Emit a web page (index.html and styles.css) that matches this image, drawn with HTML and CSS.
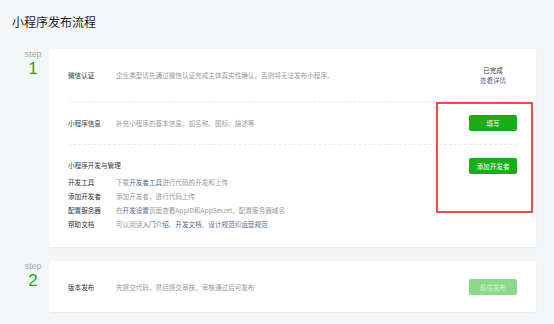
FILE: index.html
```html
<!DOCTYPE html>
<html lang="zh-CN">
<head>
  <meta charset="UTF-8">
  <title>小程序发布流程</title>
  <meta name="viewport" content="width=device-width, initial-scale=1.0">
  <link rel="stylesheet" href="styles.css">
</head>
<body>
  <div class="page">
    <h2 class="title">小程序发布流程</h2>

    <div class="step">
      <div class="step-no">
        <span class="step-word">step</span>
        <span class="step-num">1</span>
      </div>
      <div class="card">
        <div class="row row-first">
          <div class="label">微信认证</div>
          <div class="desc">企业类型请先通过微信认证完成主体真实性确认。否则将无法发布小程序。</div>
          <div class="action status">
            <div>已完成</div>
            <a class="link" href="#">查看详情</a>
          </div>
        </div>

        <div class="row row-second">
          <div class="label">小程序信息</div>
          <div class="desc">补充小程序的基本信息，如名称、图标、描述等</div>
          <div class="action"><button class="btn">填写</button></div>
        </div>

        <div class="row row-dev">
          <div class="dev-body">
            <div class="dev-head">小程序开发与管理</div>
            <div class="dev-line">
              <div class="label">开发工具</div>
              <div class="desc">下载<a class="link" href="#">开发者工具</a>进行代码的开发和上传</div>
            </div>
            <div class="dev-line">
              <div class="label">添加开发者</div>
              <div class="desc">添加开发者，进行代码上传</div>
            </div>
            <div class="dev-line">
              <div class="label">配置服务器</div>
              <div class="desc">在<a class="link" href="#">开发设置</a>页面查看AppID和AppSecret，配置服务器域名</div>
            </div>
            <div class="dev-line">
              <div class="label">帮助文档</div>
              <div class="desc">可以阅读<a class="link" href="#">入门介绍</a>、<a class="link" href="#">开发文档</a>、<a class="link" href="#">设计规范</a>和<a class="link" href="#">运营规范</a></div>
            </div>
          </div>
          <div class="action"><button class="btn">添加开发者</button></div>
        </div>

        <!-- annotation box -->
        <div class="mark"></div>
      </div>
    </div>

    <div class="step">
      <div class="step-no">
        <span class="step-word">step</span>
        <span class="step-num">2</span>
      </div>
      <div class="card">
        <div class="row row-publish">
          <div class="label">版本发布</div>
          <div class="desc">先提交代码，然后提交审核，审核通过后可发布</div>
          <div class="action"><button class="btn btn-disabled">前往发布</button></div>
        </div>
      </div>
    </div>
  </div>
</body>
</html>
```

FILE: styles.css
```css
* {
  box-sizing: border-box;
}

body {
  margin: 0;
  background-color: #f5f6f8;
  font-family: "Noto Sans CJK SC", "Noto Sans", sans-serif;
  color: #353535;
}

.page {
  padding: 14px 18px 0 12px;
}

.title {
  margin: 0 0 19px;
  font-size: 12px;
  line-height: 16px;
  font-weight: normal;
  color: #222;
}

.step {
  display: flex;
  margin-bottom: 14px;
}

.step-no {
  width: 37px;
  flex-shrink: 0;
  padding-left: 5px;
  display: flex;
  flex-direction: column;
  align-items: center;
  font-family: "Liberation Sans", sans-serif;
}

.step-word {
  font-size: 9px;
  line-height: 10px;
  color: #aaa;
}

.step-num {
  font-size: 17px;
  line-height: 19px;
  color: #1aad19;
}

.card {
  position: relative;
  flex: 1;
  background-color: #fff;
  border-radius: 2px;
  box-shadow: 0 1px 2px rgba(0, 0, 0, 0.06);
  padding: 0 19px;
}

.row {
  display: flex;
  align-items: center;
  font-size: 6.6px;
  border-bottom: 1px dashed #ededed;
}

.row-first {
  height: 53px;
}

.row-second {
  height: 43px;
}

.row-dev {
  align-items: flex-start;
  border-bottom: none;
  padding: 13px 0 16px;
}

.row-publish {
  height: 51px;
  border-bottom: none;
}

.label {
  width: 48px;
  flex-shrink: 0;
  color: #353535;
}

.desc {
  flex: 1;
  color: #999;
}

.link {
  color: #576b95;
  text-decoration: none;
}

.action {
  width: 48px;
  flex-shrink: 0;
  text-align: center;
}

.status {
  line-height: 10px;
  color: #353535;
}

.btn {
  width: 48px;
  height: 16px;
  padding: 0;
  border: none;
  border-radius: 2px;
  background-color: #1aad19;
  color: #fff;
  font-family: inherit;
  font-size: 6.6px;
}

.btn-disabled {
  background-color: #8cd98b;
  color: #d8f2d8;
}

.dev-body {
  flex: 1;
  padding-top: 1px;
}

.dev-head {
  line-height: 12px;
  margin-bottom: 4px;
}

.dev-line {
  display: flex;
  line-height: 14px;
}

.mark {
  position: absolute;
  left: 387px;
  top: 53px;
  width: 97px;
  height: 111px;
  border: 2px solid #f04b4b;
}
```
